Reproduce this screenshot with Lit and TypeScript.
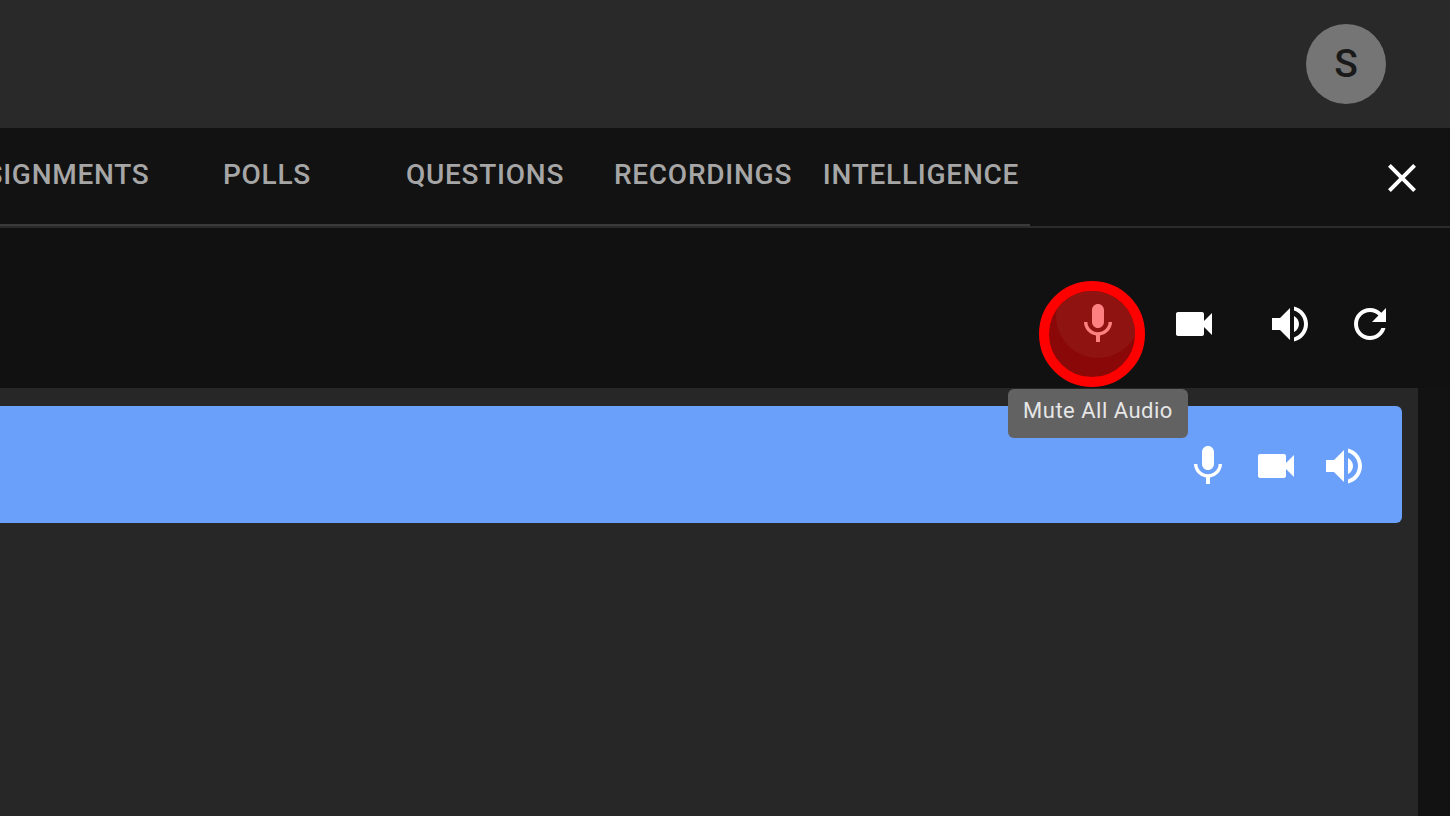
import { LitElement, html, css, svg } from "lit";
import { customElement } from "lit/decorators.js";

const P = {
  mic: "M12 14c1.66 0 2.99-1.34 2.99-3L15 5c0-1.66-1.34-3-3-3S9 3.34 9 5v6c0 1.66 1.34 3 3 3zm5.3-3c0 3-2.54 5.1-5.3 5.1S6.7 14 6.7 11H5c0 3.41 2.72 6.23 6 6.72V21h2v-3.28c3.28-.48 6-3.3 6-6.72h-1.7z",
  video: "M17 10.5V7c0-.55-.45-1-1-1H4c-.55 0-1 .45-1 1v10c0 .55.45 1 1 1h12c.55 0 1-.45 1-1v-3.5l4 4v-11l-4 4z",
  vol: "M3 9v6h4l5 5V4L7 9H3zm13.5 3c0-1.77-1.02-3.29-2.5-4.03v8.05c1.48-.73 2.5-2.25 2.5-4.02zM14 3.23v2.06c2.89.86 5 3.54 5 6.71s-2.11 5.85-5 6.71v2.06c4.01-.91 7-4.49 7-8.77s-2.99-7.86-7-8.77z",
  refresh: "M17.65 6.35C16.2 4.9 14.21 4 12 4c-4.42 0-7.99 3.58-7.99 8s3.57 8 7.99 8c3.73 0 6.84-2.55 7.73-6h-2.08c-.82 2.33-3.04 4-5.65 4-3.31 0-6-2.69-6-6s2.69-6 6-6c1.66 0 3.14.69 4.22 1.78L13 11h7V4l-2.35 2.35z",
  close: "M19 6.41 17.59 5 12 10.59 6.41 5 5 6.41 10.59 12 5 17.59 6.41 19 12 13.41 17.59 19 19 17.59 13.41 12z",
};
const icon = (d: string) =>
  html`<svg class="icon" viewBox="0 0 24 24" fill="currentColor">${svg`<path d=${d}></path>`}</svg>`;

@customElement("app-root")
export class AppRoot extends LitElement {
  static styles = css`
    :host {
      display: flex;
      flex-direction: column;
      width: 1450px;
      height: 816px;
      overflow: hidden;
      position: relative;
      background: #121212;
      font-family: Roboto, "Liberation Sans", sans-serif;
    }
    .icon { width: 48px; height: 48px; display: block; flex: none; }
    .top {
      height: 128px;
      flex: none;
      background: #292929;
      display: flex;
      align-items: center;
      justify-content: flex-end;
      padding-right: 64px;
      box-sizing: border-box;
    }
    .avatar {
      width: 80px;
      height: 80px;
      border-radius: 50%;
      background: #757575;
      color: #1a1a1a;
      font-size: 39px;
      font-weight: 500;
      display: flex;
      align-items: center;
      justify-content: center;
    }
    .tabbar {
      height: 100px;
      flex: none;
      box-sizing: border-box;
      background: #121212;
      border-bottom: 2px solid #2b2b2b;
      display: flex;
      align-items: stretch;
    }
    .tabs {
      width: 1030px;
      box-sizing: border-box;
      flex: none;
      display: flex;
      justify-content: flex-end;
      overflow: hidden;
      border-bottom: 2px solid #3a3a3a;
      padding-bottom: 4px;
    }
    .tab {
      flex: 0 0 218px;
      display: flex;
      align-items: center;
      justify-content: center;
      color: #a6a6a6;
      font-size: 28px;
      font-weight: 500;
      letter-spacing: 0.75px;
      white-space: nowrap;
    }
    .close {
      margin: 2px 24px 0 auto;
      align-self: center;
      color: #fff;
    }
    .toolbar {
      height: 160px;
      flex: none;
      box-sizing: border-box;
      padding: 48px 48px 0 0;
      background: #111111;
      display: flex;
      justify-content: flex-end;
      align-items: flex-start;
      color: #fff;
    }
    .tbtn {
      width: 96px;
      height: 96px;
      display: flex;
      align-items: center;
      justify-content: center;
    }
    .tbtn.narrow { width: 64px; }
    .content {
      flex: 1;
      width: 1418px;
      box-sizing: border-box;
      background: #272727;
      padding: 18px 16px 0 0;
    }
    .row {
      height: 117px;
      box-sizing: border-box;
      background: #6ba0fa;
      border-radius: 0 6px 6px 0;
      display: flex;
      align-items: center;
      justify-content: flex-end;
      gap: 20px;
      padding: 3px 34px 0 0;
      color: #fff;
    }
    .ring {
      position: absolute;
      left: 1039px;
      top: 281px;
      width: 106px;
      height: 106px;
      box-sizing: border-box;
      border: 10px solid #ff0000;
      border-radius: 50%;
      background: #8b0808;
      overflow: hidden;
    }
    .ripple {
      position: absolute;
      left: 7px;
      top: -17px;
      width: 84px;
      height: 84px;
      border-radius: 50%;
      background: #8f1411;
    }
    .ringmic {
      position: absolute;
      left: 1074px;
      top: 300px;
      color: #ff8080;
    }
    .tip {
      position: absolute;
      left: 1008px;
      top: 389px;
      width: 180px;
      height: 49px;
      box-sizing: border-box;
      padding-bottom: 7px;
      border-radius: 6px;
      background: #626262;
      color: #e6e6e6;
      font-size: 22px;
      display: flex;
      align-items: center;
      justify-content: center;
      letter-spacing: 0.5px;
    }
  `;

  render() {
    return html`
      <div class="top"><div class="avatar">S</div></div>
      <div class="tabbar">
        <div class="tabs">
          ${["ASSIGNMENTS", "POLLS", "QUESTIONS", "RECORDINGS", "INTELLIGENCE"].map(
            (t) => html`<div class="tab">${t}</div>`
          )}
        </div>
        <div class="close">${icon(P.close)}</div>
      </div>
      <div class="toolbar">
        <div class="tbtn"></div>
        <div class="tbtn">${icon(P.video)}</div>
        <div class="tbtn">${icon(P.vol)}</div>
        <div class="tbtn narrow">${icon(P.refresh)}</div>
      </div>
      <div class="content">
        <div class="row">${icon(P.mic)}${icon(P.video)}${icon(P.vol)}</div>
      </div>
      <div class="ring"><div class="ripple"></div></div>
      <div class="ringmic">${icon(P.mic)}</div>
      <div class="tip">Mute All Audio</div>
    `;
  }
}
